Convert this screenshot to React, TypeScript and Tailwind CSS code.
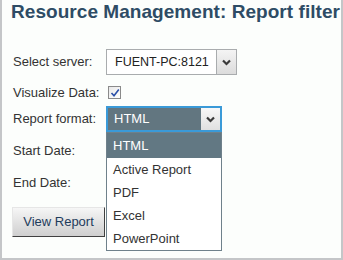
import React from "react"

function Chevron() {
  return (
    <svg width="9" height="7" viewBox="0 0 9 7" className="block">
      <path d="M1 1.5 L4.5 5 L8 1.5" fill="none" stroke="#3a3a3a" strokeWidth="2.2" />
    </svg>
  )
}

function Checkbox() {
  return (
    <div className="w-[13px] h-[13px] border border-[#8a8a8a] bg-gradient-to-br from-[#e8e8e8] to-[#ffffff] flex items-center justify-center">
      <svg width="10" height="10" viewBox="0 0 10 10">
        <path d="M1.5 5 L4 7.8 L8.8 1.5" fill="none" stroke="#2a4fa8" strokeWidth="1.6" />
      </svg>
    </div>
  )
}

const formats = ["Active Report", "PDF", "Excel", "PowerPoint"]

export default function App() {
  return (
    <div
      className="w-[343px] h-[260px] bg-[#fcfefc] border-l-2 border-r-2 border-b-2 border-[#c4c6c8] text-[#333333] text-[13px] overflow-hidden"
      style={{ fontFamily: "Tahoma, 'Liberation Sans', Arial, sans-serif" }}
    >
      <div className="pl-[9px] text-[19px] leading-[24px] font-bold tracking-[0.05px] text-[#2e4c65] whitespace-nowrap">
        Resource Management: Report filter
      </div>

      <div className="pl-[11px]">
        <div className="mt-[25px] h-[26px] flex items-center">
          <div className="w-[93px]">Select server:</div>
          <div className="w-[131px] h-[26px] border border-[#a9acae] bg-white flex items-center">
            <div className="flex-1 pl-[8px] text-[12.5px] text-[#222] whitespace-nowrap">FUENT-PC:8121</div>
            <div className="w-[20px] h-[24px] border-l border-[#a9acae] bg-gradient-to-b from-[#f4f4f4] to-[#dcdcdc] flex items-center justify-center">
              <Chevron />
            </div>
          </div>
        </div>

        <div className="h-[31px] pt-1 flex items-center">
          <div className="w-[95px]">Visualize Data:</div>
          <Checkbox />
        </div>

        <div className="h-[26px] flex items-center">
          <div className="w-[93px]">Report format:</div>
          <div className="relative">
            <div className="w-[116px] h-[26px] border-2 border-[#3a9ad8] bg-[#627680] flex items-center">
              <div className="flex-1 pl-[6px] text-[13px] text-white">HTML</div>
              <div className="w-[19px] h-[22px] bg-gradient-to-b from-[#f8f8f8] to-[#e0e0e0] flex items-center justify-center">
                <Chevron />
              </div>
            </div>
            <div className="absolute left-0 top-full w-[116px] border border-[#6f818b] bg-white z-10">
              <div className="h-[25px] bg-[#627883] text-white text-[13px] pl-[6px] flex items-center">HTML</div>
              {formats.map((f) => (
                <div key={f} className="h-[23px] text-[13px] text-[#333] pl-[6px] flex items-center">
                  {f}
                </div>
              ))}
            </div>
          </div>
        </div>

        <div className="h-[38px] flex items-center">Start Date:</div>
        <div className="h-[26px] flex items-center">End Date:</div>

        <button
          type="button"
          className="mt-[11px] -ml-[1px] w-[93px] h-[30px] bg-gradient-to-b from-[#f6f6f6] to-[#cfcfcf] border border-t-[#e6e6e6] border-l-[#e6e6e6] border-r-[#404040] border-b-[#404040] text-[13px] text-[#1e3c5c]"
        >
          View Report
        </button>
      </div>
    </div>
  )
}
